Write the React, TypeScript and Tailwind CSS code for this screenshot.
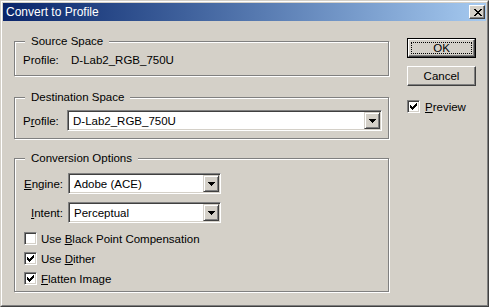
import React from "react";

const Check = () => (
  <svg width="7" height="7" viewBox="0 0 7 7" shapeRendering="crispEdges">
    {[2, 3, 4, 3, 2, 1, 0].map((y, x) => (
      <rect key={x} x={x} y={y} width="1" height="3" fill="#000" />
    ))}
  </svg>
);

const Arrow = () => (
  <svg width="7" height="4" viewBox="0 0 7 4" shapeRendering="crispEdges">
    <rect x="0" y="0" width="7" height="1" fill="#000" />
    <rect x="1" y="1" width="5" height="1" fill="#000" />
    <rect x="2" y="2" width="3" height="1" fill="#000" />
    <rect x="3" y="3" width="1" height="1" fill="#000" />
  </svg>
);

const CloseGlyph = () => {
  const rows = [
    "XX....XX",
    ".XX..XX.",
    "..XXXX..",
    "...XX...",
    "..XXXX..",
    ".XX..XX.",
    "XX....XX",
  ];
  return (
    <svg width="8" height="7" viewBox="0 0 8 7" shapeRendering="crispEdges">
      {rows.flatMap((r, y) =>
        r.split("").map((c, x) =>
          c === "X" ? <rect key={`${x}-${y}`} x={x} y={y} width="1" height="1" fill="#000" /> : null
        )
      )}
    </svg>
  );
};

function Checkbox({ checked }: { checked: boolean }) {
  return (
    <div className="w-[13px] h-[13px] shrink-0 bg-white border border-t-[#808080] border-l-[#808080] border-r-white border-b-white shadow-[inset_1px_1px_0_#404040,inset_-1px_-1px_0_#d4d0c8] flex items-center justify-center">
      {checked && <Check />}
    </div>
  );
}

function Select({ value, wide }: { value: string; wide: boolean }) {
  return (
    <div
      className={
        (wide ? "w-[315px]" : "w-[153px]") +
        " h-[21px] bg-white border border-t-[#808080] border-l-[#808080] border-r-white border-b-white shadow-[inset_1px_1px_0_#404040,inset_-1px_-1px_0_#d4d0c8] p-[1px] flex"
      }
    >
      <div className="flex-1 flex items-center pl-[4px]">{value}</div>
      <div className="w-[16px] h-full bg-[#d4d0c8] border border-t-[#d4d0c8] border-l-[#d4d0c8] border-r-[#404040] border-b-[#404040] shadow-[inset_1px_1px_0_#fff,inset_-1px_-1px_0_#808080] flex items-center justify-center">
        <Arrow />
      </div>
    </div>
  );
}

function Group({
  title,
  className,
  children,
}: {
  title: string;
  className: string;
  children: React.ReactNode;
}) {
  return (
    <div
      className={
        "relative border border-[#808080] shadow-[1px_1px_0_#fff,inset_1px_1px_0_#fff] " +
        className
      }
    >
      <span className="absolute left-[10px] -top-[7px] px-[6px] bg-[#d4d0c8] leading-[12px]">
        {title}
      </span>
      {children}
    </div>
  );
}

export default function App() {
  return (
    <div className="w-[489px] h-[307px] flex flex-col border border-t-[#d4d0c8] border-l-[#d4d0c8] border-r-[#404040] border-b-[#404040] font-['Liberation_Sans',Arial,sans-serif] text-[11.5px] leading-[12px] text-black select-none">
      <div className="flex-1 flex flex-col border border-t-white border-l-white border-r-[#808080] border-b-[#808080] p-[1px] bg-[#d4d0c8]">
        <div className="h-[18px] shrink-0 flex items-center bg-gradient-to-r from-[#0a246a] to-[#a6caf0] pl-[3px] pr-[1px]">
          <span className="flex-1 text-white text-[12px] leading-[14px]">Convert to Profile</span>
          <div className="w-[16px] h-[14px] bg-[#d4d0c8] border border-t-white border-l-white border-r-[#404040] border-b-[#404040] shadow-[inset_-1px_-1px_0_#808080] flex items-center justify-center pl-[1px]">
            <CloseGlyph />
          </div>
        </div>

        <div className="flex-1 flex items-start pl-[11px]">
          <div className="w-[375px] pt-[20px] flex flex-col">
            <Group title="Source Space" className="h-[35px] pt-[12px] pl-[8px]">
              <div className="flex items-center">
                <span className="w-[48px]">Profile:</span>
                <span>D-Lab2_RGB_750U</span>
              </div>
            </Group>

            <Group title="Destination Space" className="mt-[21px] h-[42px] pt-[12px] pl-[8px]">
              <div className="flex items-center">
                <span className="w-[44px]">
                  P<span className="underline underline-offset-[1px]">r</span>ofile:
                </span>
                <Select value="D-Lab2_RGB_750U" wide={true} />
              </div>
            </Group>

            <Group title="Conversion Options" className="mt-[19px] h-[134px] pt-[14px] pl-[8px]">
              <div className="flex items-center">
                <span className="w-[40px] mr-[5px] text-right">
                  <span className="underline underline-offset-[1px]">E</span>ngine:
                </span>
                <Select value="Adobe (ACE)" wide={false} />
              </div>
              <div className="flex items-center mt-[8px]">
                <span className="w-[40px] mr-[5px] text-right">
                  <span className="underline underline-offset-[1px]">I</span>ntent:
                </span>
                <Select value="Perceptual" wide={false} />
              </div>
              <div className="flex flex-col gap-[7px] mt-[9px] ml-[1px]">
                <div className="flex items-center gap-[4px] h-[13px]">
                  <Checkbox checked={false} />
                  <span>
                    Use <span className="underline underline-offset-[1px]">B</span>lack Point Compensation
                  </span>
                </div>
                <div className="flex items-center gap-[4px] h-[13px]">
                  <Checkbox checked={true} />
                  <span>
                    Use <span className="underline underline-offset-[1px]">D</span>ither
                  </span>
                </div>
                <div className="flex items-center gap-[4px] h-[13px]">
                  <Checkbox checked={true} />
                  <span>
                    <span className="underline underline-offset-[1px]">F</span>latten Image
                  </span>
                </div>
              </div>
            </Group>
          </div>

          <div className="ml-[18px] pt-[17px] flex flex-col">
            <div className="w-[69px] h-[20px] border border-black">
              <div className="w-full h-full bg-[#d4d0c8] border border-t-white border-l-white border-r-[#404040] border-b-[#404040] shadow-[inset_-1px_-1px_0_#808080] p-[2px]">
                <div className="w-full h-full border border-dotted border-black flex items-center justify-center">
                  OK
                </div>
              </div>
            </div>
            <div className="mt-[8px] w-[69px] h-[20px] bg-[#d4d0c8] border border-t-white border-l-white border-r-[#404040] border-b-[#404040] shadow-[inset_-1px_-1px_0_#808080] flex items-center justify-center">
              Cancel
            </div>
            <div className="mt-[14px] flex items-center gap-[5px]">
              <Checkbox checked={true} />
              <span>
                <span className="underline underline-offset-[1px]">P</span>review
              </span>
            </div>
          </div>
        </div>
      </div>
    </div>
  );
}
